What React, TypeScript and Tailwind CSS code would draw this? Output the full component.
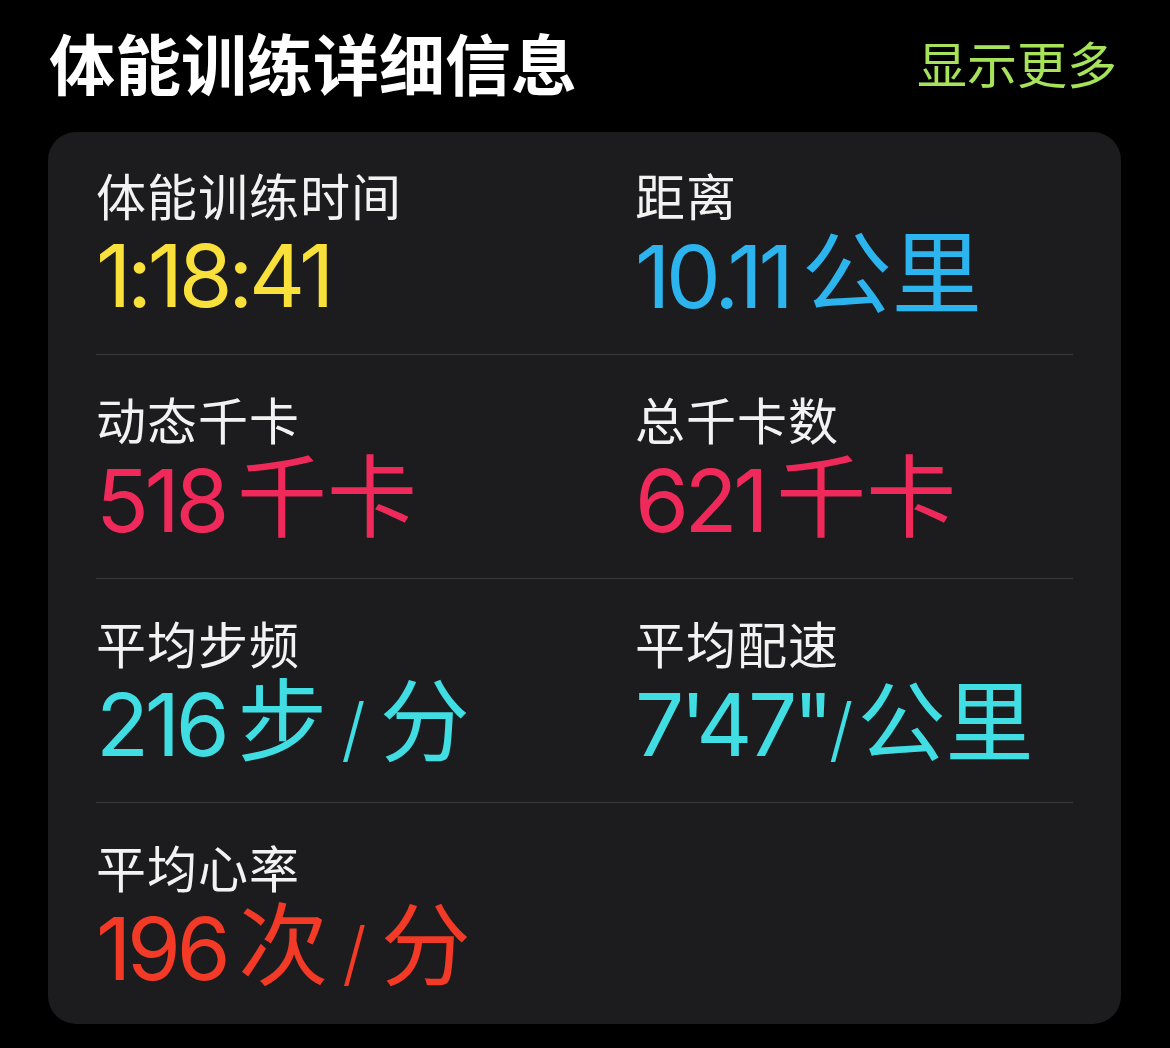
const cjk = "font-['Inter','Noto_Sans_CJK_SC',sans-serif]";

type Metric = {
  label: string;
  value: React.ReactNode;
};

function Value({ num, unit, color }: { num: string; unit?: React.ReactNode; color: string }) {
  return (
    <div className={`${color} flex items-baseline h-[96px] leading-[96px]`}>
      <span className="text-[87px] tracking-[-0.05em] font-['Inter',sans-serif] translate-y-[2px]">{num}</span>
      {unit}
    </div>
  );
}

function Row({
  left,
  right,
  first,
  last,
}: {
  left: Metric;
  right?: Metric;
  first?: boolean;
  last?: boolean;
}) {
  return (
    <div
      className={`grid grid-cols-[539px_1fr] ${first ? "pt-[38px]" : "pt-[39px]"} ${
        last ? "pb-[30px]" : "pb-[32px] border-b border-[#38383a]"
      }`}
    >
      {[left, right].map((m, i) => (
        <div key={i}>
          {m && (
            <>
              <div className="text-[50px] leading-[56px] tracking-[1px] text-[#f2f2f2]">{m.label}</div>
              {m.value}
            </>
          )}
        </div>
      ))}
    </div>
  );
}

const Unit = ({ children }: { children: React.ReactNode }) => (
  <span className="text-[90px] ml-[12px]">{children}</span>
);
const Slash = () => <span className="text-[70px] mx-[14px] font-light">/</span>;

export default function App() {
  return (
    <div className={`bg-black min-h-[1048px] w-[1170px] ${cjk}`}>
      <div className="flex items-center justify-between pl-[49px] pr-[53px] pt-[22px] h-[132px] pb-[22px]">
        <h1 className="text-white text-[66px] font-bold leading-none">体能训练详细信息</h1>
        <span className="text-[#a6e35b] text-[50px] leading-none">显示更多</span>
      </div>
      <div className="mx-[48px] w-[1073px] bg-[#1c1c1e] rounded-[28px] px-[48px]">
        <Row
          first
          left={{
            label: "体能训练时间",
            value: <Value num="1:18:41" color="text-[#f9e03a]" />,
          }}
          right={{
            label: "距离",
            value: <Value num="10.11" color="text-[#2cb4ef]" unit={<Unit>公里</Unit>} />,
          }}
        />
        <Row
          left={{
            label: "动态千卡",
            value: <Value num="518" color="text-[#ef2a5b]" unit={<Unit>千卡</Unit>} />,
          }}
          right={{
            label: "总千卡数",
            value: <Value num="621" color="text-[#ef2a5b]" unit={<Unit>千卡</Unit>} />,
          }}
        />
        <Row
          left={{
            label: "平均步频",
            value: (
              <Value
                num="216"
                color="text-[#40dde3]"
                unit={
                  <>
                    <Unit>步</Unit>
                    <Slash />
                    <span className="text-[90px]">分</span>
                  </>
                }
              />
            ),
          }}
          right={{
            label: "平均配速",
            value: (
              <Value
                num={"7'47\""}
                color="text-[#40dde3]"
                unit={
                  <>
                    <span className="text-[70px] mr-[4px] font-light">/</span>
                    <span className="text-[88px]">公里</span>
                  </>
                }
              />
            ),
          }}
        />
        <Row
          last
          left={{
            label: "平均心率",
            value: (
              <Value
                num="196"
                color="text-[#f23a27]"
                unit={
                  <>
                    <Unit>次</Unit>
                    <Slash />
                    <span className="text-[90px]">分</span>
                  </>
                }
              />
            ),
          }}
        />
      </div>
    </div>
  );
}
